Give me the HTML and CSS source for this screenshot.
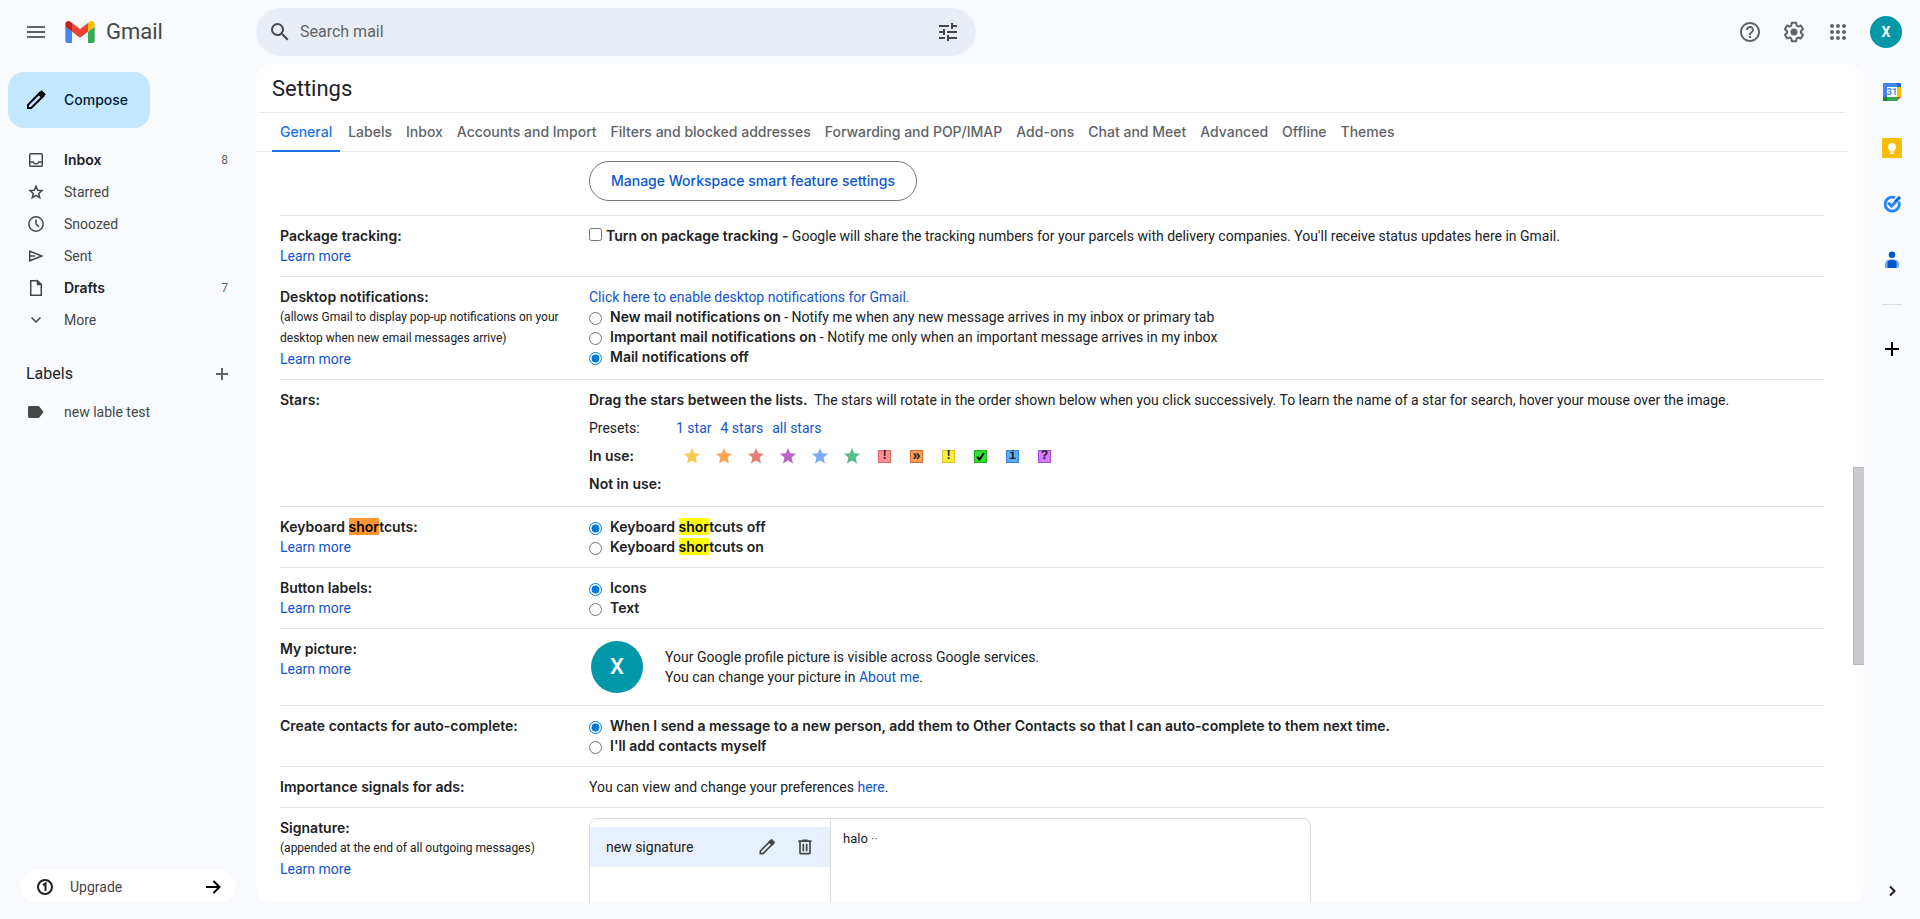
FILE: index.html
```html
<!DOCTYPE html>
<html lang="en-GB">
<head>
  <meta charset="UTF-8" />
  <meta name="viewport" content="width=device-width, initial-scale=1.0" />
  <title>Settings - Gmail</title>
  <link rel="stylesheet" href="styles.css">
</head>
<body>
  <header class="topbar">
    <div class="brand">
      <button class="icon-btn" type="button" aria-label="Main menu">
        <svg width="24" height="24" viewBox="0 0 24 24" fill="#5f6368"><path d="M3 18h18v-2H3v2zm0-5h18v-2H3v2zm0-7v2h18V6H3z"/></svg>
      </button>
      <a class="logo" href="#">
        <svg width="30" height="22" viewBox="52 42 88 66">
          <path fill="#4285f4" d="M58 108h14V74L52 59v43c0 3.320 2.690 6 6 6"/>
          <path fill="#34a853" d="M120 108h14c3.320 0 6-2.690 6-6V59l-20 15"/>
          <path fill="#fbbc04" d="M120 48v26l20-15v-8c0-7.420-8.470-11.650-14.400-7.200"/>
          <path fill="#ea4335" d="M72 74V48l24 18 24-18v26L96 92"/>
          <path fill="#c5221f" d="M52 51v8l20 15V48l-5.600-4.200c-5.940-4.450-14.400-.22-14.400 7.200"/>
        </svg>
        <span>Gmail</span>
      </a>
    </div>
    <form class="search">
      <button class="icon-btn" type="button" aria-label="Search">
        <svg width="24" height="24" viewBox="0 0 24 24" fill="#444746"><path d="M15.500 14h-.79l-.28-.27A6.470 6.470 0 0 0 16 9.500 6.500 6.500 0 1 0 9.500 16c1.610 0 3.090-.59 4.230-1.570l.27.28v.79l5 4.990L20.490 19l-4.990-5zm-6 0C7.010 14 5 11.990 5 9.500S7.010 5 9.500 5 14 7.010 14 9.500 11.990 14 9.500 14z"/></svg>
      </button>
      <input type="text" placeholder="Search mail" aria-label="Search mail" />
      <button class="icon-btn" type="button" aria-label="Search options">
        <svg width="24" height="24" viewBox="0 0 24 24" fill="#444746"><path d="M3 17v2h6v-2H3zM3 5v2h10V5H3zm10 16v-2h8v-2h-8v-2h-2v6h2zM7 9v2H3v2h4v2h2V9H7zm14 4v-2H11v2h10zm-6-4h2V7h4V5h-4V3h-2v6z"/></svg>
      </button>
    </form>
    <div class="account">
      <button class="icon-btn" type="button" aria-label="Support">
        <svg width="24" height="24" viewBox="0 0 24 24" fill="#5f6368"><path d="M11 18h2v-2h-2v2zm1-16C6.480 2 2 6.480 2 12s4.480 10 10 10 10-4.480 10-10S17.520 2 12 2zm0 18c-4.410 0-8-3.590-8-8s3.590-8 8-8 8 3.590 8 8-3.590 8-8 8zm0-14c-2.210 0-4 1.790-4 4h2c0-1.100.9-2 2-2s2 .9 2 2c0 2-3 1.750-3 5h2c0-2.250 3-2.500 3-5 0-2.210-1.790-4-4-4z"/></svg>
      </button>
      <button class="icon-btn" type="button" aria-label="Settings">
        <svg width="24" height="24" viewBox="0 0 24 24" fill="#5f6368"><path d="M13.850 22.250h-3.700c-.74 0-1.360-.54-1.450-1.270l-.27-1.890c-.27-.14-.53-.29-.79-.46l-1.800.72c-.7.260-1.470-.03-1.810-.65L2.200 15.530c-.35-.66-.2-1.440.36-1.880l1.530-1.190c-.01-.15-.02-.3-.02-.46 0-.15.010-.31.020-.46l-1.520-1.190c-.59-.45-.74-1.260-.37-1.880l1.850-3.190c.34-.62 1.110-.9 1.790-.63l1.810.73c.26-.17.520-.32.780-.46l.27-1.910c.09-.7.710-1.250 1.440-1.250h3.700c.74 0 1.360.54 1.450 1.270l.27 1.890c.27.14.53.29.79.46l1.800-.72c.71-.26 1.480.03 1.820.65l1.840 3.180c.36.66.2 1.440-.36 1.880l-1.520 1.190c.01.15.02.3.02.46s-.01.31-.02.46l1.520 1.190c.56.45.72 1.230.37 1.860l-1.860 3.220c-.34.62-1.110.9-1.800.63l-1.800-.72c-.26.17-.52.32-.78.46l-.27 1.910c-.1.680-.72 1.220-1.460 1.220zm-3.230-2h2.760l.37-2.550.53-.22c.44-.18.88-.44 1.340-.78l.45-.34 2.380.96 1.380-2.400-2.030-1.580.07-.56c.03-.26.06-.51.060-.78s-.03-.53-.06-.78l-.07-.56 2.030-1.580-1.390-2.400-2.390.96-.45-.35c-.42-.32-.87-.58-1.330-.77l-.52-.22-.37-2.550h-2.760l-.37 2.550-.53.210c-.44.190-.88.440-1.340.79l-.45.330-2.380-.95-1.390 2.390 2.030 1.580-.07.560a7 7 0 0 0-.06.790c0 .26.020.53.060.78l.07.560-2.030 1.580 1.380 2.400 2.390-.96.450.350c.43.330.86.580 1.330.77l.53.220.38 2.550z"/><circle cx="12" cy="12" r="3.500"/></svg>
      </button>
      <button class="icon-btn" type="button" aria-label="Google apps">
        <svg width="24" height="24" viewBox="0 0 24 24" fill="#5f6368"><path d="M6 8c1.100 0 2-.9 2-2s-.9-2-2-2-2 .9-2 2 .9 2 2 2zm6 12c1.100 0 2-.9 2-2s-.9-2-2-2-2 .9-2 2 .9 2 2 2zm-6 0c1.100 0 2-.9 2-2s-.9-2-2-2-2 .9-2 2 .9 2 2 2zm0-6c1.100 0 2-.9 2-2s-.9-2-2-2-2 .9-2 2 .9 2 2 2zm6 0c1.100 0 2-.9 2-2s-.9-2-2-2-2 .9-2 2 .9 2 2 2zm4-8c0 1.100.9 2 2 2s2-.9 2-2-.9-2-2-2-2 .9-2 2zm-4 2c1.100 0 2-.9 2-2s-.9-2-2-2-2 .9-2 2 .9 2 2 2zm6 6c1.100 0 2-.9 2-2s-.9-2-2-2-2 .9-2 2 .9 2 2 2zm0 6c1.100 0 2-.9 2-2s-.9-2-2-2-2 .9-2 2 .9 2 2 2z"/></svg>
      </button>
      <button class="avatar" type="button" aria-label="Account">X</button>
    </div>
  </header>

  <div class="shell">
    <nav class="sidebar">
      <button class="compose" type="button">
        <svg width="24" height="24" viewBox="0 0 24 24" fill="none" stroke="#000" stroke-width="2"><path d="M4 20v-3.200L15.800 5l3.200 3.200L7.200 20z"/><path fill="#000" d="M14.800 6l2.800-2.400L20.400 6.400 18 9.200z"/></svg>
        Compose
      </button>
      <ul class="folders">
        <li><a class="folder unread" href="#">
          <svg width="20" height="20" viewBox="0 0 20 20" fill="none" stroke="#444746" stroke-width="1.500"><rect x="3.750" y="3.750" width="12.500" height="12.500" rx="1"/><path d="M4 12h3.200c.5 1.200 1.500 2 2.800 2s2.300-.8 2.800-2H16"/></svg>
          <span>Inbox</span><span class="count">8</span></a></li>
        <li><a class="folder" href="#">
          <svg width="20" height="20" viewBox="0 0 20 20" fill="none" stroke="#444746" stroke-width="1.500"><path d="M10 4.200l1.700 4 4.300.4-3.300 2.800 1 4.200-3.700-2.200-3.700 2.200 1-4.200L4 8.600l4.300-.4z"/></svg>
          <span>Starred</span></a></li>
        <li><a class="folder" href="#">
          <svg width="20" height="20" viewBox="0 0 20 20" fill="none" stroke="#444746" stroke-width="1.500"><circle cx="10" cy="10" r="7.200"/><path d="M10 5.500V10l3 3"/></svg>
          <span>Snoozed</span></a></li>
        <li><a class="folder" href="#">
          <svg width="20" height="20" viewBox="0 0 20 20" fill="none" stroke="#444746" stroke-width="1.500"><path d="M3.750 5.200L15.800 10 3.750 14.800zM4 10h5"/></svg>
          <span>Sent</span></a></li>
        <li><a class="folder unread" href="#">
          <svg width="20" height="20" viewBox="0 0 20 20" fill="none" stroke="#444746" stroke-width="1.500"><path d="M5 2.750h6.500l3.750 3.750v10.750H4.750V2.750z"/><path fill="#444746" d="M11.500 3v3.500H15z"/></svg>
          <span>Drafts</span><span class="count">7</span></a></li>
        <li><a class="folder" href="#">
          <svg width="20" height="20" viewBox="0 0 20 20" fill="none" stroke="#444746" stroke-width="1.500"><path d="M5.500 7.500L10 12l4.500-4.500"/></svg>
          <span>More</span></a></li>
      </ul>
      <div class="labels-head">
        <h2>Labels</h2>
        <button class="add-label" type="button" aria-label="Create new label">
          <svg width="20" height="20" viewBox="0 0 20 20" fill="none" stroke="#5f6368" stroke-width="2"><path d="M10 4v12M4 10h12"/></svg>
        </button>
      </div>
      <a class="folder" href="#">
        <svg width="20" height="20" viewBox="0 0 20 20" fill="#444746"><path d="M3.500 4h8.700c.5 0 1 .2 1.300.7L17.500 10l-4 5.300c-.3.500-.8.700-1.300.7H3.500c-.8 0-1.500-.6-1.500-1.400V5.400C2 4.600 2.700 4 3.500 4z"/></svg>
        <span>new lable test</span></a>
      <a class="upgrade" href="#">
        <svg width="18" height="18" viewBox="0 0 18 18" fill="none" stroke="#1f1f1f" stroke-width="2"><circle cx="9" cy="9" r="7"/><path d="M7 7.200L9.500 5.500V13"/></svg>
        <span>Upgrade</span>
        <svg width="18" height="18" viewBox="0 0 18 18" fill="none" stroke="#000" stroke-width="2"><path d="M2 9h13M9.500 3l6 6-6 6"/></svg>
      </a>
    </nav>

    <main class="panel">
      <h1>Settings</h1>
      <div class="tabs">
        <a class="tab active" href="#">General</a>
        <a class="tab" href="#">Labels</a>
        <a class="tab" href="#">Inbox</a>
        <a class="tab" href="#">Accounts and Import</a>
        <a class="tab" href="#">Filters and blocked addresses</a>
        <a class="tab" href="#">Forwarding and POP/IMAP</a>
        <a class="tab" href="#">Add-ons</a>
        <a class="tab" href="#">Chat and Meet</a>
        <a class="tab" href="#">Advanced</a>
        <a class="tab" href="#">Offline</a>
        <a class="tab" href="#">Themes</a>
      </div>

      <div class="settings">
        <div class="row">
          <div></div>
          <div><button class="outline-btn" type="button">Manage Workspace smart feature settings</button></div>
        </div>

        <div class="row">
          <div class="name"><b>Package tracking:</b><a href="#">Learn more</a></div>
          <div>
            <div class="check"><input type="checkbox" id="tracking" /><label for="tracking"><b>Turn on package tracking -</b> Google will share the tracking numbers for your parcels with delivery companies. You'll receive status updates here in Gmail.</label></div>
          </div>
        </div>

        <div class="row">
          <div class="name"><b>Desktop notifications:</b><small>(allows Gmail to display pop-up notifications on your desktop when new email messages arrive)</small><a href="#">Learn more</a></div>
          <div>
            <a href="#">Click here to enable desktop notifications for Gmail.</a>
            <div class="option"><input type="radio" name="notify" id="notify-new" /><label for="notify-new"><b>New mail notifications on</b> - Notify me when any new message arrives in my inbox or primary tab</label></div>
            <div class="option"><input type="radio" name="notify" id="notify-imp" /><label for="notify-imp"><b>Important mail notifications on</b> - Notify me only when an important message arrives in my inbox</label></div>
            <div class="option"><input type="radio" name="notify" id="notify-off" checked /><label for="notify-off"><b>Mail notifications off</b></label></div>
          </div>
        </div>

        <div class="row">
          <div class="name"><b>Stars:</b></div>
          <div class="stars">
            <div><b>Drag the stars between the lists.</b>&nbsp; The stars will rotate in the order shown below when you click successively. To learn the name of a star for search, hover your mouse over the image.</div>
            <div class="star-line"><span class="star-key">Presets:</span><span class="presets"><a href="#">1 star</a><a href="#">4 stars</a><a href="#">all stars</a></span></div>
            <div class="star-line">
              <b class="star-key">In use:</b>
              <span class="star-list">
                <svg class="star" viewBox="0 0 16 16" fill="#f7cb4d"><path d="M8 0l2.200 5.300 5.800.5-4.400 3.800L13 15.500 8 12.400 3 15.500l1.400-5.900L0 5.800l5.800-.5z"/></svg>
                <svg class="star" viewBox="0 0 16 16" fill="#ffa44c"><path d="M8 0l2.200 5.300 5.800.5-4.400 3.800L13 15.500 8 12.400 3 15.500l1.400-5.900L0 5.800l5.800-.5z"/></svg>
                <svg class="star" viewBox="0 0 16 16" fill="#e77c73"><path d="M8 0l2.200 5.300 5.800.5-4.400 3.800L13 15.500 8 12.400 3 15.500l1.400-5.900L0 5.800l5.800-.5z"/></svg>
                <svg class="star" viewBox="0 0 16 16" fill="#b964c8"><path d="M8 0l2.200 5.300 5.800.5-4.400 3.800L13 15.500 8 12.400 3 15.500l1.400-5.900L0 5.800l5.800-.5z"/></svg>
                <svg class="star" viewBox="0 0 16 16" fill="#7baaf7"><path d="M8 0l2.200 5.300 5.800.5-4.400 3.800L13 15.500 8 12.400 3 15.500l1.400-5.900L0 5.800l5.800-.5z"/></svg>
                <svg class="star" viewBox="0 0 16 16" fill="#57bb8a"><path d="M8 0l2.200 5.300 5.800.5-4.400 3.800L13 15.500 8 12.400 3 15.500l1.400-5.900L0 5.800l5.800-.5z"/></svg>
                <span class="mark red">!</span>
                <span class="mark orange">»</span>
                <span class="mark yellow">!</span>
                <span class="mark green"><svg width="11" height="11" viewBox="0 0 11 11" fill="none" stroke="#000" stroke-width="2"><path d="M2 5.500l2.500 3L9 2"/></svg></span>
                <span class="mark blue">i</span>
                <span class="mark purple">?</span>
              </span>
            </div>
            <div class="star-line"><b>Not in use:</b></div>
          </div>
        </div>

        <div class="row">
          <div class="name"><b>Keyboard <mark class="current">shor</mark>tcuts:</b><a href="#">Learn more</a></div>
          <div>
            <div class="option"><input type="radio" name="keys" id="keys-off" checked /><label for="keys-off"><b>Keyboard <mark>shor</mark>tcuts off</b></label></div>
            <div class="option"><input type="radio" name="keys" id="keys-on" /><label for="keys-on"><b>Keyboard <mark>shor</mark>tcuts on</b></label></div>
          </div>
        </div>

        <div class="row">
          <div class="name"><b>Button labels:</b><a href="#">Learn more</a></div>
          <div>
            <div class="option"><input type="radio" name="btn-labels" id="btn-icons" checked /><label for="btn-icons"><b>Icons</b></label></div>
            <div class="option"><input type="radio" name="btn-labels" id="btn-text" /><label for="btn-text"><b>Text</b></label></div>
          </div>
        </div>

        <div class="row">
          <div class="name"><b>My picture:</b><a href="#">Learn more</a></div>
          <div class="picture">
            <span class="photo">X</span>
            <p>Your Google profile picture is visible across Google services.<br>You can change your picture in <a href="#">About me</a>.</p>
          </div>
        </div>

        <div class="row">
          <div class="name"><b>Create contacts for auto-complete:</b></div>
          <div>
            <div class="option"><input type="radio" name="contacts" id="contacts-auto" checked /><label for="contacts-auto"><b>When I send a message to a new person, add them to Other Contacts so that I can auto-complete to them next time.</b></label></div>
            <div class="option"><input type="radio" name="contacts" id="contacts-self" /><label for="contacts-self"><b>I'll add contacts myself</b></label></div>
          </div>
        </div>

        <div class="row">
          <div class="name"><b>Importance signals for ads:</b></div>
          <div>You can view and change your preferences <a href="#">here</a>.</div>
        </div>

        <div class="row">
          <div class="name"><b>Signature:</b><small>(appended at the end of all outgoing messages)</small><a href="#">Learn more</a></div>
          <div class="signature">
            <div class="sig-list">
              <div class="sig-item">
                <span>new signature</span>
                <button type="button" aria-label="Edit signature name">
                  <svg width="20" height="20" viewBox="0 0 24 24" fill="none" stroke="#444746" stroke-width="2"><path d="M4 20v-3.200L15.800 5l3.200 3.200L7.200 20z"/><path fill="#444746" d="M14.800 6l2.800-2.400L20.400 6.400 18 9.200z"/></svg>
                </button>
                <button type="button" aria-label="Delete signature">
                  <svg width="20" height="20" viewBox="0 0 24 24" fill="#444746"><path d="M15 4V3H9v1H4v2h1v13c0 1.100.9 2 2 2h10c1.100 0 2-.9 2-2V6h1V4h-5zm2 15H7V6h10v13zM9 8h2v9H9zm4 0h2v9h-2z"/></svg>
                </button>
              </div>
            </div>
            <div class="sig-body">halo <span>··</span></div>
          </div>
        </div>
      </div>
      <div class="thumb"></div>
    </main>

    <aside class="rail">
      <a href="#" aria-label="Calendar">
        <svg width="20" height="20" viewBox="0 0 20 20"><path fill="#4285f4" d="M1.500 1H15v4H5v10H1V1.500z"/><path fill="#1967d2" d="M15 1h3.500l.5.500V5h-4z"/><path fill="#fbbc04" d="M15 5h4v10h-4z"/><path fill="#34a853" d="M5 15h10v4H5z"/><path fill="#188038" d="M1 15h4v4H1.500l-.5-.5z"/><path fill="#ea4335" d="M15 15h4l-4 4z"/><path fill="#fff" d="M5 5h10v10H5z"/><text class="cal-day" x="10" y="13" text-anchor="middle">31</text></svg>
      </a>
      <a href="#" aria-label="Keep">
        <svg width="20" height="20" viewBox="0 0 20 20"><rect width="20" height="20" rx="1.500" fill="#fbbc04"/><path fill="#fff" d="M10 5a4 4 0 0 0-2.300 7.300V13.500h4.600v-1.200A4 4 0 0 0 10 5zM8 14.500h4V16H8z"/></svg>
      </a>
      <a href="#" aria-label="Tasks">
        <svg width="20" height="20" viewBox="0 0 20 20" fill="none"><path stroke="#2684fc" stroke-width="2.800" d="M16.700 7.500A7 7 0 1 1 13 3.700"/><path stroke="#2684fc" stroke-width="3" d="M6.200 8.800l3.300 3.300 4-4"/><path stroke="#0066da" stroke-width="3" d="M13 8l5-5"/></svg>
      </a>
      <a href="#" aria-label="Contacts">
        <svg width="20" height="20" viewBox="0 0 20 20"><circle cx="10" cy="4.800" r="3.300" fill="#0057cc"/><path fill="#7baaf7" d="M3 18v-4c0-2.500 1.800-4.300 4-4.300h6c2.200 0 4 1.800 4 4.300v2c0 1.200-.8 2-2 2z"/><path fill="#0057cc" d="M5.500 18v-4.500c0-2.200 1.500-3.800 3.500-3.800h2c2 0 3.500 1.600 3.500 3.800V18z"/></svg>
      </a>
      <hr>
      <button type="button" aria-label="Get add-ons">
        <svg width="20" height="20" viewBox="0 0 20 20" fill="none" stroke="#000" stroke-width="2"><path d="M10 3v14M3 10h14"/></svg>
      </button>
      <button class="collapse" type="button" aria-label="Hide side panel">
        <svg width="20" height="20" viewBox="0 0 20 20" fill="none" stroke="#1f1f1f" stroke-width="2"><path d="M8 5.500l4.500 4.500L8 14.500"/></svg>
      </button>
    </aside>
  </div>
</body>
</html>
```
FILE: styles.css
```css
* { box-sizing: border-box; }
body {
  margin: 0;
  height: 100vh;
  display: flex;
  flex-direction: column;
  overflow: hidden;
  background: #f8fafd;
  color: #202124;
  font-family: Roboto, "Liberation Sans", sans-serif;
  font-size: 14px;
  line-height: 20px;
}
a { color: #15c; text-decoration: none; }
b { font-family: Inter, Roboto, sans-serif; font-weight: 600; }
button {
  padding: 0;
  border: none;
  background: none;
  font: inherit;
  cursor: pointer;
}
svg { display: block; flex: none; }
h1, h2, p, ul { margin: 0; padding: 0; font-weight: normal; }
li { list-style: none; }

/* header */
.topbar {
  display: flex;
  align-items: center;
  height: 64px;
  flex: none;
}
.brand {
  display: flex;
  align-items: center;
  width: 256px;
  padding-left: 16px;
}
.icon-btn {
  display: grid;
  place-items: center;
  width: 40px;
  height: 40px;
}
.logo {
  display: flex;
  align-items: center;
  gap: 11px;
  margin-left: 9px;
  color: #444746;
  font-size: 22px;
}
.search {
  display: flex;
  align-items: center;
  width: 720px;
  height: 48px;
  padding: 0 8px 0 4px;
  border-radius: 24px;
  background: #e9eef6;
}
.search input {
  flex: 1;
  padding: 0;
  border: none;
  outline: none;
  background: none;
  font: inherit;
  font-size: 16px;
}
.search input::placeholder { color: #5f6368; }
.account {
  display: flex;
  align-items: center;
  gap: 4px;
  margin-left: auto;
  padding-right: 18px;
}
.avatar {
  width: 32px;
  height: 32px;
  margin-left: 8px;
  border-radius: 50%;
  background: #0097a7;
  color: #fff;
  font-weight: bold;
}

.shell {
  display: flex;
  flex: 1;
  min-height: 0;
}

/* left side */
.sidebar {
  display: flex;
  flex-direction: column;
  width: 256px;
  flex: none;
  padding-bottom: 16px;
}
.compose {
  display: flex;
  align-items: center;
  gap: 16px;
  align-self: flex-start;
  height: 56px;
  margin: 8px 8px 16px;
  padding: 0 22px 0 16px;
  border-radius: 16px;
  background: #c2e7ff;
  color: #001d35;
  font-family: Inter, Roboto, sans-serif;
  font-weight: 500;
}
.folder {
  display: flex;
  align-items: center;
  gap: 18px;
  height: 32px;
  padding: 0 28px 0 26px;
  color: #444746;
}
.unread {
  color: #202124;
  font-family: Inter, Roboto, sans-serif;
  font-weight: 600;
}
.count {
  margin-left: auto;
  color: #5f6368;
  font-family: Roboto, sans-serif;
  font-size: 12px;
  font-weight: normal;
}
.labels-head {
  display: flex;
  align-items: center;
  justify-content: space-between;
  height: 40px;
  margin: 18px 0 2px;
  padding: 0 24px 0 26px;
}
.labels-head h2 { font-size: 16px; }
.upgrade {
  display: flex;
  align-items: center;
  gap: 16px;
  height: 32px;
  margin: auto 20px 0;
  padding: 0 14px 0 16px;
  border-radius: 16px;
  background: #fff;
  color: #444746;
}
.upgrade span { flex: 1; }

/* settings panel */
.panel {
  position: relative;
  display: flex;
  flex-direction: column;
  flex: 1;
  min-width: 0;
  margin-bottom: 16px;
  border-radius: 16px;
  background: #fff;
  overflow: hidden;
}
h1 {
  height: 49px;
  margin: 0 18px 0 2px;
  padding-left: 14px;
  border-bottom: 1px solid #e8eaed;
  font-size: 22px;
  line-height: 50px;
}
.tabs {
  display: flex;
  height: 39px;
  flex: none;
  margin-right: 16px;
  padding-left: 16px;
  border-bottom: 1px solid #e8eaed;
}
.tab {
  height: 39px;
  padding: 0 8px;
  color: #5f6368;
  font-family: Inter, Roboto, sans-serif;
  font-weight: 500;
  line-height: 38px;
  white-space: nowrap;
}
.tab + .tab { padding-right: 6px; }
.tab.active { border-bottom: 2px solid #1a73e8; color: #1a73e8; }
.settings {
  flex: 1;
  min-height: 0;
  margin: 0 40px 0 24px;
  overflow: hidden;
}
.row {
  display: grid;
  grid-template-columns: 293px 1fr;
  gap: 16px;
  padding: 10px 0;
  border-top: 1px solid #e3e3e3;
}
.row:first-child {
  padding: 9px 0 14px;
  border-top: none;
}
.name b, .name a, .name small { display: block; }
small { font-size: 12px; line-height: 21px; }
.outline-btn {
  height: 40px;
  padding: 0 21px;
  border: 1px solid #747775;
  border-radius: 20px;
  color: #0b57d0;
  font-family: Inter, Roboto, sans-serif;
  font-weight: 500;
}
.check, .option { display: flex; }
.check { gap: 4px; }
.option { gap: 8px; }
.option b { font-weight: 600; }
input[type="checkbox"], input[type="radio"] {
  flex: none;
  width: 13px;
  height: 13px;
  margin: 5px 0 0;
  accent-color: #0078d7;
}
input[type="checkbox"] { margin-top: 2px; }

/* stars */
.stars {
  display: flex;
  flex-direction: column;
  gap: 8px;
  padding-bottom: 2px;
}
.star-line { display: flex; align-items: center; }
.star-key { width: 87px; }
.presets { display: flex; gap: 9px; }
.star-list {
  display: flex;
  align-items: center;
  gap: 16px;
  padding-left: 8px;
}
.star { width: 16px; height: 16px; }
.mark {
  display: grid;
  place-items: center;
  width: 13px;
  height: 13px;
  margin: 0 1px 0 2px;
  border: 1px solid;
  font: bold 12px/11px "Liberation Mono", monospace;
}
.mark.orange { font-size: 14px; }
.red { border-color: #d96666; background: #ff8f8f; }
.orange { border-color: #d96c2c; background: #ff9c55; }
.yellow { border-color: #d6c32a; background: #ffed3b; }
.green { border-color: #1fa81f; background: #32e032; }
.blue { border-color: #3b83d0; background: #59acff; }
.purple { border-color: #a34ad6; background: #d67aff; }

mark { background: #ff0; color: #000; }
mark.current { background: #ff9632; }

.picture { display: flex; align-items: center; height: 56px; }
.photo {
  width: 52px;
  height: 52px;
  margin: 0 22px 0 2px;
  border-radius: 50%;
  background: #0097a7;
  color: #fff;
  font-size: 22px;
  font-weight: 500;
  line-height: 52px;
  text-align: center;
}

/* signature editor */
.signature {
  display: flex;
  width: 722px;
  height: 240px;
  border: 1px solid #dadce0;
  border-radius: 8px;
}
.sig-list {
  width: 241px;
  padding-top: 8px;
  border-right: 1px solid #dadce0;
}
.sig-item {
  display: flex;
  align-items: center;
  gap: 18px;
  height: 40px;
  padding: 0 15px 0 16px;
  background: #e8f0fe;
}
.sig-item span { flex: 1; }
.sig-body { padding: 10px 12px; font-size: 13px; }
.sig-body span { color: #5f6368; }

/* scroll thumb */
.thumb {
  position: absolute;
  top: 48%;
  right: 0;
  width: 11px;
  height: 198px;
  border: 1px solid #b8b8b8;
  border-right: none;
  background: #ccc;
}

/* side panel */
.rail {
  display: flex;
  flex-direction: column;
  align-items: center;
  gap: 36px;
  width: 56px;
  flex: none;
  padding: 18px 0;
}
.rail hr {
  width: 20px;
  margin: -2px 0;
  border: none;
  border-top: 1px solid #dadce0;
}
.collapse { margin-top: auto; }
.cal-day { fill: #4285f4; font: bold 9px Roboto, sans-serif; }
```
